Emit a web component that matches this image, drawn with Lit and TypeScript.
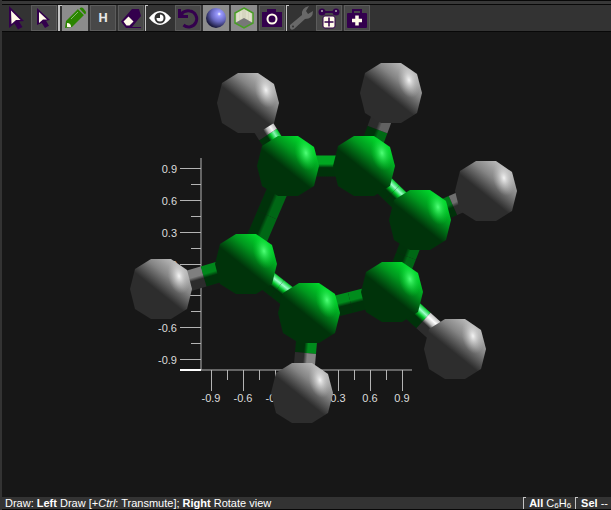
import { LitElement, html, svg, css } from "lit";
import { customElement, state } from "lit/decorators.js";

type Element = "C" | "H";
interface Atom { el: Element; x: number; y: number }

const ATOMS: Atom[] = [
  { el: "C", x: 288, y: 166 }, { el: "C", x: 364, y: 166 }, { el: "C", x: 420, y: 220 },
  { el: "C", x: 392, y: 292 }, { el: "C", x: 309, y: 313 }, { el: "C", x: 246, y: 264 },
  { el: "H", x: 248, y: 103 }, { el: "H", x: 391, y: 93 }, { el: "H", x: 486, y: 191 },
  { el: "H", x: 455, y: 349 }, { el: "H", x: 302, y: 393 }, { el: "H", x: 161, y: 289 },
];
const BONDS: [number, number][] = [
  [0, 1], [1, 2], [2, 3], [3, 4], [4, 5], [5, 0],
  [0, 6], [1, 7], [2, 8], [3, 9], [4, 10], [5, 11],
];
const BALL = "-31,0 -26,-20 -10,-30 10,-30 26,-19 31,0 26,20 10,30 -10,30 -26,20";

const mix = (a: number[], b: number[], t: number) =>
  `rgb(${a.map((v, i) => Math.round(v + (b[i] - v) * t)).join(",")})`;

// Shades run across a rod from its lit edge to its dark edge.
const shades = (el: Element, gloss: number) => {
  const dark = el === "C" ? [0, 50, 10] : [44, 44, 44];
  const lit = el === "C" ? [0, 200, 40] : [190, 190, 190];
  const shine = el === "C" ? [160, 255, 205] : [255, 255, 255];
  const edge = mix(dark, lit, gloss);
  const peak = gloss > 0.8 ? mix(lit, shine, (gloss - 0.8) * 5) : edge;
  return { edge, peak, dark: mix(dark, dark, 0) };
};

const rod = (ends: [number, number], i: number) => {
  const a = ATOMS[ends[0]], b = ATOMS[ends[1]];
  const dx = b.x - a.x, dy = b.y - a.y, len = Math.hypot(dx, dy);
  let nx = dy / len, ny = -dx / len;
  if (nx * 0.6 - ny * 0.8 < 0) { nx = -nx; ny = -ny; }
  const gloss = Math.max(0.35, Math.min(1, nx * 0.64 - ny * 0.75 + 0.03));
  const mx = (a.x + b.x) / 2, my = (a.y + b.y) / 2, r = 10.5;
  const half = (p: Atom, key: string) => {
    const s = shades(p.el, gloss);
    const pt = (x: number, y: number, k: number) => `${x + nx * r * k},${y + ny * r * k}`;
    return svg`
      <linearGradient id=${key} gradientUnits="userSpaceOnUse"
        x1=${mx + nx * r} y1=${my + ny * r} x2=${mx - nx * r} y2=${my - ny * r}>
        <stop offset="0" stop-color=${s.edge} />
        <stop offset=".22" stop-color=${s.peak} />
        <stop offset=".4" stop-color=${s.edge} />
        <stop offset=".58" stop-color=${s.dark} />
        <stop offset="1" stop-color=${s.dark} />
      </linearGradient>
      <polygon fill="url(#${key})"
        points="${pt(p.x, p.y, 1)} ${pt(mx, my, 1)} ${pt(mx, my, -1)} ${pt(p.x, p.y, -1)}" />`;
  };
  return svg`${half(a, `rod${i}a`)}${half(b, `rod${i}b`)}`;
};

const ball = (a: Atom) => svg`
  <g transform="translate(${a.x} ${a.y})">
    <polygon points=${BALL} fill="url(#body${a.el})" />
    <polygon points=${BALL} fill="url(#glow${a.el})" />
  </g>`;

const axisY = () => Array.from({ length: 13 }, (_, i) => {
  const y = 168 + Math.round((i * 191) / 12), major = i % 2 === 0;
  const label = i === 6 ? "0.000" : (0.9 - i * 0.15).toFixed(1);
  return svg`<path d="M${major ? 180 : 191} ${y + 0.5}H201" />
    ${major ? svg`<text class="num" x="177" y=${y + 5} text-anchor="end">${label}</text>` : ""}`;
});
const axisX = () => Array.from({ length: 13 }, (_, i) => {
  const x = 211 + Math.round((i * 191) / 12), major = i % 2 === 0;
  const label = i === 6 ? "" : (i * 0.15 - 0.9).toFixed(1);
  return svg`<path d="M${x + 0.5} 370V${major ? 391 : 380}" />
    ${major && label ? svg`<text class="num" x=${x} y="402" text-anchor="middle">${label}</text>` : ""}`;
});

const ICONS: Record<string, unknown> = {
  pick: svg`<path d="M6 1L21 16l-5 .5 3.500 5.500-4.500 2.500-3.500-6L6 23z" fill="#33004d"/><path d="M8 5.500l9.500 9.500h-4.500l-4.500 4z" fill="#fffbe8"/>`,
  select: svg`<path d="M6 3l13 12-4 .7 3 5-4 2.300-3.200-5L6 20z" fill="#33004d"/><path d="M8 7l8 7.500h-4l-4 3.500z" fill="#fffbe8"/>`,
  draw: svg`<path d="M3 23l1-7L16 4l6 6L10 22z" fill="#2b8500"/><path d="M17.500 3.500q2-2 4 0l1.500 2q2 2 0 4z" fill="#2b8500"/><path d="M16 3.500l6.500 6.500" stroke="#8c8c8c" stroke-width="1"/><path d="M9 14l7-7" stroke="#83bd6d" stroke-width="1"/><path d="M5 18q4 0 4 4h-4z" fill="#fffbe8"/>`,
  erase: svg`<path d="M3 16.500L14 4h7l2 7-9 11h9v1H8z" fill="#33004d"/><path d="M5.500 16.500l5-5 5 5-4 4H8.500z" fill="#fffbe8"/>`,
  look: svg`<path d="M2 13Q13-1 24 13Q13 27 2 13z" fill="#fff"/><circle cx="13" cy="13" r="5.500" fill="#333"/><circle cx="13" cy="13" r="3.500" fill="#fff"/><path d="M9 9h4v4H9z" fill="#333"/>`,
  undo: svg`<path d="M6 9q4-4 9-3a8 8 0 1 1-6.500 14" fill="none" stroke="#33004d" stroke-width="3"/><path d="M3 4v9h10v-3H9L6 7V4z" fill="#33004d"/>`,
  ball: svg`<defs><radialGradient id="blue" cx=".66" cy=".3" r=".7"><stop offset="0" stop-color="#fff"/><stop offset=".14" stop-color="#9a9aff"/><stop offset=".55" stop-color="#6868c0"/><stop offset="1" stop-color="#1c1c40"/></radialGradient></defs><circle cx="13" cy="13" r="10" fill="url(#blue)"/>`,
  box: svg`<path d="M13 3l9 5v10l-9 5-9-5V8z" fill="#d6d6c0"/><path d="M13 13l9 5-9 5-9-5z" fill="#777"/><path d="M7 7v9M10 5v9M16 5v9M19 7v9" stroke="#e8e8d4"/><path d="M13 3l9 5v10l-9 5-9-5V8z" fill="none" stroke="#489d24" stroke-width="1.500"/>`,
  camera: svg`<path d="M8 7V4h9v3h6v15H3V7z" fill="#33004d"/><circle cx="13" cy="14" r="4.500" fill="none" stroke="#fffbe8" stroke-width="2"/>`,
  wrench: svg`<path d="M2 20L14 10Q13 3 21 1l-3 5 2 3 5-3q0 8-8 8L6 24q-3 2-4-1z" fill="#686868"/><circle cx="5" cy="21.500" r="1" fill="#333"/>`,
  build: svg`<path d="M6 7h14" stroke="#33004d" stroke-width="2"/><circle cx="6" cy="7" r="3.500" fill="#33004d"/><circle cx="20" cy="7" r="3.500" fill="#33004d"/><circle cx="6" cy="6" r="1" fill="#aaa"/><circle cx="20" cy="6" r="1" fill="#aaa"/><rect x="7" y="11" width="12" height="12" rx="2" fill="#fffbe8" stroke="#33004d"/><path d="M13 12.500v9M8.500 17h9" stroke="#33004d" stroke-width="1.500"/>`,
  kit: svg`<path d="M9 8V5h8v3" fill="none" stroke="#33004d" stroke-width="2"/><rect x="3" y="8" width="20" height="15" rx="1" fill="#33004d"/><path d="M13 10.500v10M8 15.500h10" stroke="#fffbe8" stroke-width="3.500"/>`,
};
const TOOLS = [
  [["pick", "Pick", "plain"], ["select", "Select", ""]],
  [["draw", "Draw", "on"], ["hydrogen", "Element H", ""], ["erase", "Erase", ""]],
  [["look", "View", "plain"], ["undo", "Reset view", ""], ["ball", "Ball and stick", "on"], ["box", "Show axes", "on"], ["camera", "Snapshot", ""]],
  [["wrench", "Tools", "plain"], ["build", "Build", ""], ["kit", "Clean up", ""]],
];

@customElement("app-root")
class AppRoot extends LitElement {
  @state() private formula = ["C", "6", "H", "6"];

  static styles = css`
    :host { display: flex; flex-direction: column; min-height: 100vh; box-sizing: border-box;
      background: #171717; border-left: 2px solid #333; color: #fff;
      font: 11px/12px "Liberation Sans", sans-serif; }
    .bar { display: flex; background: #333; height: 26px; padding-left: 1px;
      border-top: 1px solid #080808; border-bottom: 1px solid #080808; }
    .top { height: 3px; background: #383838; border-top: 1px solid #080808; }
    .group { display: flex; gap: 2px; }
    .group + .group { position: relative; border-left: 1px solid #c4c4c4; margin-left: 1px; padding-left: 1px; }
    .group:nth-child(2) { border-left-width: 2px; padding-left: 2px; }
    .group + .group::before, .cell::before { content: ""; position: absolute; left: 0; top: 0;
      width: 2px; height: 1px; background: #c4c4c4; }
    button { width: 26px; height: 26px; box-sizing: border-box; padding: 0; margin: 0;
      border: 1px solid #5c5c5c; background: #484848; color: #e8e8e8;
      font: bold 13px/24px Roboto, sans-serif; }
    .plain { background: none; border-color: transparent; }
    .on { background: #8c8c8c; border-color: #8c8c8c; }
    .icon { display: block; margin: -1px; width: 26px; height: 26px; }
    main { flex: 1; min-height: 0; display: flex; }
    .scene { display: block; width: 100%; height: auto; }
    .axis path { stroke: #b4b4b4; fill: none; }
    .axis .base { stroke: #fff; stroke-width: 2; }
    .num { font: 11px "Liberation Sans", sans-serif; fill: #dcdcdc; }
    footer { display: flex; justify-content: space-between; background: #333;
      padding: 0 3px; white-space: nowrap; border-bottom: 1px solid #080808; }
    .info { display: flex; gap: 4px; }
    .cell { position: relative; border-left: 1px solid #c4c4c4; padding-left: 5px; height: 12px; word-spacing: normal; }
    sub { font-size: 8px; line-height: 8px; vertical-align: -1px; }
  `;

  render() {
    return html`
      <div class="top"></div>
      <nav class="bar">${TOOLS.map((g) => html`<div class="group">${g.map(([id, name, cls]) => html`
        <button class=${cls} aria-label=${name}>${id === "hydrogen" ? "H" : html`<svg class="icon" viewBox="0 0 26 26">${ICONS[id]}</svg>`}</button>`)}</div>`)}</nav>
      <main><svg class="scene" viewBox="2 32 609 465" role="img" aria-label="Benzene model">
        <defs>
          <linearGradient id="bodyC" gradientUnits="userSpaceOnUse" x1="17" y1="-23" x2="-3" y2="2">
            <stop offset="0" stop-color="#00d42a"/><stop offset=".45" stop-color="#00981e"/><stop offset="1" stop-color="#00330a"/></linearGradient>
          <linearGradient id="bodyH" gradientUnits="userSpaceOnUse" x1="17" y1="-23" x2="-3" y2="2">
            <stop offset="0" stop-color="#b4b4b4"/><stop offset=".45" stop-color="#848484"/><stop offset="1" stop-color="#2d2d2d"/></linearGradient>
          <radialGradient id="glowC" gradientUnits="userSpaceOnUse" cx="0" cy="0" r="1" gradientTransform="translate(18 -13) rotate(-12) scale(11 18)">
            <stop offset="0" stop-color="#50ff78"/><stop offset="1" stop-color="#00d42a" stop-opacity="0"/></radialGradient>
          <radialGradient id="glowH" gradientUnits="userSpaceOnUse" cx="0" cy="0" r="1" gradientTransform="translate(18 -13) rotate(-12) scale(11 18)">
            <stop offset="0" stop-color="#f4f4f4"/><stop offset="1" stop-color="#bbb" stop-opacity="0"/></radialGradient>
        </defs>
        <g class="axis"><path d="M201 158V370M201 370H412" />${axisY()}${axisX()}<path class="base" d="M180 370H201" /></g>
        ${BONDS.map(rod)}${ATOMS.map(ball)}
      </svg></main>
      <footer>
        <span>Draw: <b>Left</b> Draw [+<i>Ctrl</i>: Transmute]; <b>Right</b> Rotate view</span>
        <span class="info"><span class="cell"><b>All</b> ${this.formula.map((p) => (p > "9" ? p : html`<sub>${p}</sub>`))}</span><span class="cell"><b>Sel</b> --</span></span>
      </footer>`;
  }
}
